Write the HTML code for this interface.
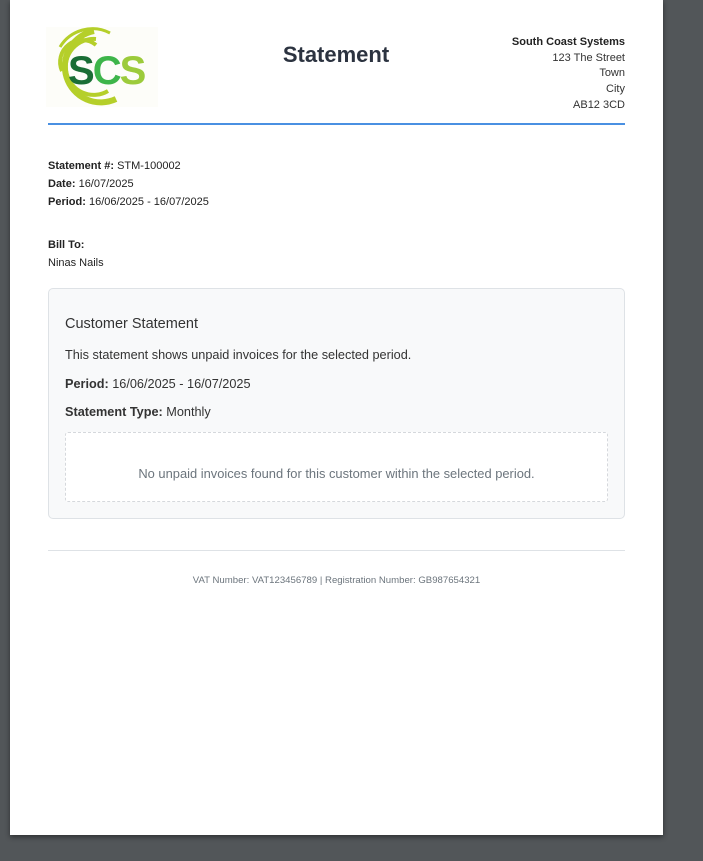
<!DOCTYPE html>
<html><head><meta charset="utf-8"><style>
html,body{margin:0;padding:0;}
body{width:703px;height:861px;background:#525659;position:relative;overflow:hidden;font-family:"Liberation Sans",Arial,sans-serif;color:#212529;}
.page{position:absolute;left:10px;top:0;width:653px;height:835px;background:#fff;box-shadow:0 2px 5px rgba(0,0,0,.45);}
.a{position:absolute;white-space:nowrap;}
</style></head><body>
<div class="page"></div>
<svg class="a" style="left:46px;top:27px" width="112" height="80" viewBox="0 0 112 80">
<rect width="112" height="80" fill="#fdfdf9"/>
<g fill="none" stroke="#b5cf2a">
<path d="M48 4 A36 36 0 1 0 70 72" stroke-width="6"/>
<path d="M50 12 A28 28 0 1 0 62 64" stroke-width="4"/>
<path d="M16 44 A22 22 0 0 1 50 18" stroke-width="4"/>
<path d="M14 20 A38 38 0 0 1 64 6" stroke-width="3"/>
</g>
<text x="22" y="57" font-family="Liberation Sans,sans-serif" font-weight="bold" font-size="40" fill="#1a6e35" letter-spacing="-2">S<tspan fill="#3db54a">C</tspan><tspan fill="#9ccb3b">S</tspan></text>
</svg>
<div class="a" style="left:236px;width:200px;text-align:center;top:42px;font-size:22px;font-weight:bold;color:#2c3340">Statement</div>
<div class="a" style="right:78px;top:35px;text-align:right;font-size:11px;line-height:15.7px;color:#333">
<b style="color:#222">South Coast Systems</b><br>123 The Street<br>Town<br>City<br>AB12 3CD</div>
<div class="a" style="left:48px;top:123px;width:577px;height:2px;background:#4a90e2"></div>
<div class="a" style="left:48px;top:157px;font-size:11px;line-height:18px;color:#222">
<b>Statement #:</b> STM-100002<br><b>Date:</b> 16/07/2025<br><b>Period:</b> 16/06/2025 - 16/07/2025</div>
<div class="a" style="left:48px;top:236px;font-size:11px;line-height:18px;color:#222"><b>Bill To:</b><br>Ninas Nails</div>
<div class="a" style="left:48px;top:288px;width:575px;height:229px;background:#f8f9fa;border:1px solid #dee2e6;border-radius:5px"></div>
<div class="a" style="left:65px;top:316px;font-size:14.5px;color:#333">Customer Statement</div>
<div class="a" style="left:65px;top:348px;font-size:12.7px;color:#333">This statement shows unpaid invoices for the selected period.</div>
<div class="a" style="left:65px;top:377px;font-size:12.7px;color:#333"><b>Period:</b> 16/06/2025 - 16/07/2025</div>
<div class="a" style="left:65px;top:405px;font-size:12.7px;color:#333"><b>Statement Type:</b> Monthly</div>
<div class="a" style="left:65px;top:432px;width:541px;height:68px;background:#fff;border:1px dashed #d5d8dc;border-radius:3px"></div>
<div class="a" style="left:65px;width:543px;text-align:center;top:466px;font-size:12.9px;color:#6c757d">No unpaid invoices found for this customer within the selected period.</div>
<div class="a" style="left:48px;top:550px;width:577px;height:1px;background:#dee2e6"></div>
<div class="a" style="left:48px;width:577px;text-align:center;top:575px;font-size:9.6px;color:#6c757d">VAT Number: VAT123456789 | Registration Number: GB987654321</div>
</body></html>
